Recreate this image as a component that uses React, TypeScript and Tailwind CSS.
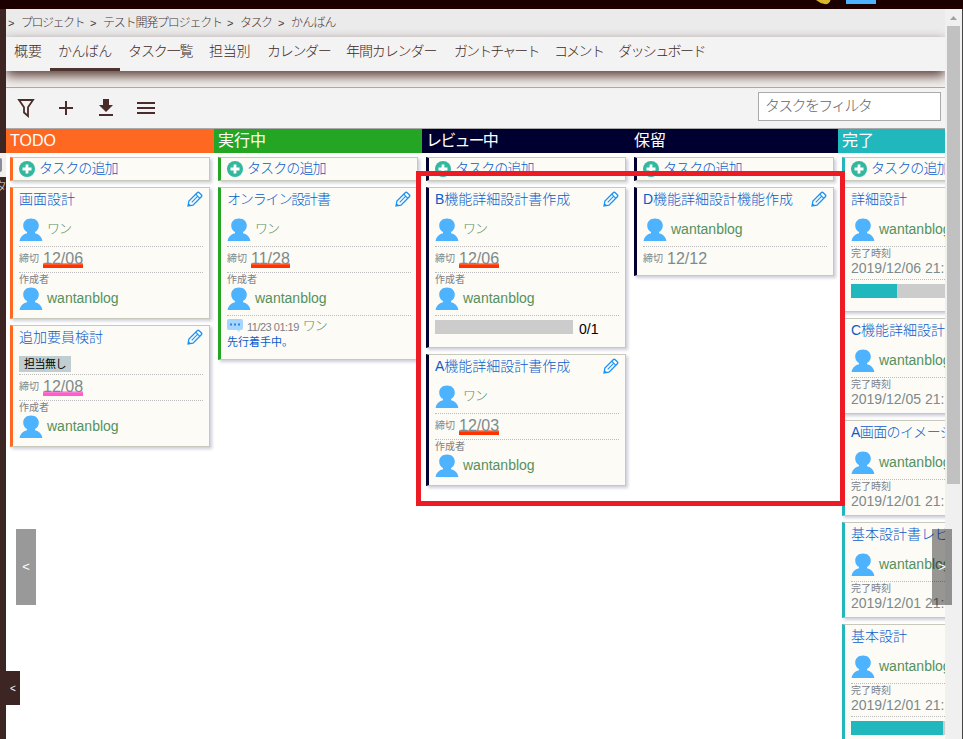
import type { ReactNode } from "react";
import clsx from "clsx";

type Comment = { time: string; author: string; text: string };

type Task = {
  title: string;
  tracking?: string;
  assignee?: string;
  due?: string;
  dueColor?: "red" | "pink";
  creator?: string;
  comment?: Comment;
  finished?: string;
  progress?: number;
  count?: string;
};

type Column = {
  name: string;
  header: string;
  edge: string;
  tasks: Task[];
};

const columns: Column[] = [
  {
    name: "TODO",
    header: "bg-[#ff6820]",
    edge: "border-l-[#ff6820]",
    tasks: [
      { title: "画面設計", assignee: "ワン", due: "12/06", dueColor: "red", creator: "wantanblog" },
      { title: "追加要員検討", due: "12/08", dueColor: "pink", creator: "wantanblog" },
    ],
  },
  {
    name: "実行中",
    header: "bg-[#24a624]",
    edge: "border-l-[#24a624]",
    tasks: [
      {
        title: "オンライン設計書",
        tracking: "tracking-[-1.15px]",
        assignee: "ワン",
        due: "11/28",
        dueColor: "red",
        creator: "wantanblog",
        comment: { time: "11/23 01:19", author: "ワン", text: "先行着手中。" },
      },
    ],
  },
  {
    name: "レビュー中",
    header: "bg-[#000030]",
    edge: "border-l-[#000030]",
    tasks: [
      {
        title: "B機能詳細設計書作成",
        assignee: "ワン",
        due: "12/06",
        dueColor: "red",
        creator: "wantanblog",
        progress: 0,
        count: "0/1",
      },
      { title: "A機能詳細設計書作成", assignee: "ワン", due: "12/03", dueColor: "red", creator: "wantanblog" },
    ],
  },
  {
    name: "保留",
    header: "bg-[#000030]",
    edge: "border-l-[#000030]",
    tasks: [{ title: "D機能詳細設計機能作成", assignee: "wantanblog", due: "12/12" }],
  },
  {
    name: "完了",
    header: "bg-[#20b7bd]",
    edge: "border-l-[#20b7bd]",
    tasks: [
      { title: "詳細設計", assignee: "wantanblog", finished: "2019/12/06 21:", progress: 1 / 3 },
      { title: "C機能詳細設計", assignee: "wantanblog", finished: "2019/12/05 21:" },
      { title: "A画面のイメージ", tracking: "tracking-[-0.6px]", assignee: "wantanblog", finished: "2019/12/01 21:" },
      { title: "基本設計書レビュー", assignee: "wantanblog", finished: "2019/12/01 21:" },
      { title: "基本設計", assignee: "wantanblog", finished: "2019/12/01 21:", progress: 2 / 3 },
    ],
  },
];

const tabs = [
  { label: "概要", width: "w-[44px]", tracking: "" },
  { label: "かんばん", width: "w-[70px]", tracking: "tracking-[-0.6px]" },
  { label: "タスク一覧", width: "w-[81px]", tracking: "tracking-[-1.1px]" },
  { label: "担当別", width: "w-[58px]", tracking: "tracking-[-0.3px]" },
  { label: "カレンダー", width: "w-[79px]", tracking: "tracking-[-1.3px]" },
  { label: "年間カレンダー", width: "w-[108px]", tracking: "tracking-[-1.1px]" },
  { label: "ガントチャート", width: "w-[100px]", tracking: "tracking-[-1.9px]" },
  { label: "コメント", width: "w-[64px]", tracking: "tracking-[-1.7px]" },
  { label: "ダッシュボード", width: "w-[104px]", tracking: "tracking-[-1.6px]" },
];

const crumbs = [
  { label: "プロジェクト", width: "w-[67px]", tracking: "tracking-[-1.5px]" },
  { label: "テスト開発プロジェクト", width: "w-[122px]", tracking: "tracking-[-1.2px]" },
  { label: "タスク", width: "w-[36px]", tracking: "tracking-[-1.5px]" },
  { label: "かんばん", width: "w-[60px]", tracking: "tracking-[-0.8px]" },
];

function PersonIcon() {
  return (
    <svg width="24" height="24" viewBox="0 0 24 24" className="shrink-0" fill="#4db3ff">
      <path d="M12 .5c4.600 0 7.800 2.800 7.800 7 0 3.200-1.600 5.400-3.800 6.500v1.200c4.300 1 6.900 4 7.400 7.800H.600c.5-3.800 3.100-6.800 7.400-7.800V14c-2.200-1.100-3.800-3.300-3.800-6.500 0-4.200 3.200-7 7.800-7z" />
    </svg>
  );
}

function PencilIcon() {
  return (
    <svg width="16" height="16" viewBox="0 0 16 16" fill="none" stroke="#1b92f5" strokeWidth="1.300">
      <path d="M1 15l.9-5L10.200 1.700q1-1 2 0l2.100 2.100q1 1 0 2L6 14.100z" />
      <path d="M8.700 3.200l4.100 4.100M4.700 11.300l5.600-5.600" strokeWidth="1.100" />
      <path d="M1 15l.6-2.900 2.300 2.300z" fill="#1b92f5" stroke="none" />
    </svg>
  );
}

function AddIcon() {
  return (
    <svg width="16" height="16" viewBox="0 0 16 16">
      <circle cx="8" cy="8" r="8" fill="#33b89f" />
      <path d="M8 3.500v9M3.500 8h9" stroke="#fff" strokeWidth="2.800" />
    </svg>
  );
}

function CommentIcon() {
  return (
    <svg width="16" height="13" viewBox="0 0 16 13">
      <path d="M2 0h12q2 0 2 2v7q0 2-2 2h-1.500v2L10 11H2q-2 0-2-2V2q0-2 2-2z" fill="#a6d5ff" />
      <path d="M3 4.500h2v2H3zM7 4.500h2v2H7zM11 4.500h2v2h-2z" fill="#2c86dc" />
    </svg>
  );
}

function Person({ name }: { name: string }) {
  return (
    <div className="flex h-[26px] items-center gap-1 text-[#559060]">
      <PersonIcon />
      <span className={name === "ワン" ? "pb-[3px] text-[13px] tracking-[-1px]" : "pb-px"}>{name}</span>
    </div>
  );
}

function Section({ height, children }: { height: string; children: ReactNode }) {
  return <div className={clsx("border-t border-dotted border-[#bbb]", height)}>{children}</div>;
}

function Progress({ value, count }: { value: number; count?: string }) {
  return (
    <div className="flex items-center gap-[6px] pt-1 text-black">
      <div className="h-[14px] w-[138px] shrink-0 bg-[#ccc]">
        <div className="h-full bg-[#20b7bd]" style={{ width: `${value * 100}%` }} />
      </div>
      <span className="h-[14px] leading-[18px]">{count}</span>
    </div>
  );
}

function TaskCard({ task, edge }: { task: Task; edge: string }) {
  return (
    <div
      className={clsx(
        "w-[200px] shrink-0 border border-l-[3px] border-[#c8c8bc] bg-[#fcfbf6] px-[6px] pb-[3px] shadow-[2px_2px_3px_rgba(0,0,60,0.2)]",
        edge,
      )}
    >
      <div className={task.assignee ? "h-[58px]" : "h-12"}>
        <div className="flex h-[29px] items-start justify-between">
          <span className={clsx("leading-[22px] whitespace-nowrap text-[#0b5bcb]", task.tracking)}>{task.title}</span>
          <span className="pt-[3px]">
            <PencilIcon />
          </span>
        </div>
        {task.assignee ? (
          <Person name={task.assignee} />
        ) : (
          <div className="mt-px flex h-4 w-[52px] items-center justify-center bg-[#c0ced2] text-[11px] font-normal tracking-[-0.5px] text-black">
            担当無し
          </div>
        )}
      </div>
      {task.due && (
        <Section height="h-[26px]">
          <div className="flex items-center gap-1 pt-[3px] text-[#7c8a8c]">
            <span className="pb-px text-[10px] font-normal">締切</span>
            <span
              className={clsx(
                "h-[18px] text-[16px] leading-[18px]",
                task.dueColor === "red" && "bg-[linear-gradient(transparent_72%,#ff9a80_74%,#ff3300_84%)]",
                task.dueColor === "pink" && "bg-[linear-gradient(transparent_72%,#ffb0e0_74%,#ff5ccc_84%)]",
              )}
            >
              {task.due}
            </span>
          </div>
        </Section>
      )}
      {task.creator && (
        <Section height="h-[43px]">
          <div className="h-[13px] text-[10px] leading-[14px] font-normal text-[#7c8088]">作成者</div>
          <Person name={task.creator} />
        </Section>
      )}
      {task.finished && (
        <Section height="h-[33px]">
          <div className="h-[13px] text-[10px] leading-[14px] font-normal text-[#7c8088]">完了時刻</div>
          <div className="leading-4 whitespace-nowrap text-[#7c8a8c]">{task.finished}</div>
        </Section>
      )}
      {task.comment && (
        <Section height="h-[41px]">
          <div className="flex h-[18px] items-center gap-1 pt-px">
            <CommentIcon />
            <span className="pt-[3px] text-[11px] tracking-[-0.5px] text-[#7c8088]">{task.comment.time}</span>
            <span className="text-[13px] tracking-[-1px] text-[#559060]">{task.comment.author}</span>
          </div>
          <div className="text-[11px] leading-4 font-normal text-[#0b5bcb]">{task.comment.text}</div>
        </Section>
      )}
      {task.progress !== undefined && (
        <Section height="h-[29px]">
          <Progress value={task.progress} count={task.count} />
        </Section>
      )}
    </div>
  );
}

function BoardColumn({ column }: { column: Column }) {
  return (
    <section className="w-[208px] shrink-0">
      <h2 className={clsx("h-6 pl-1 text-[16px] leading-[23px] font-normal text-white", column.header)}>
        <span className={column.name === "レビュー中" ? "tracking-[-1.8px]" : ""}>{column.name}</span>
      </h2>
      <div className="flex flex-col gap-[6px] px-1 pt-1">
        <button
          className={clsx(
            "flex h-6 w-[200px] items-center gap-1 border border-l-[3px] border-[#c8c8bc] bg-[#fcfbf6] px-[6px] text-[#0b5bcb] shadow-[2px_2px_3px_rgba(0,0,60,0.2)]",
            column.edge,
          )}
        >
          <AddIcon />
          <span className="pb-px tracking-[-0.9px] whitespace-nowrap">タスクの追加</span>
        </button>
        {column.tasks.map((task, i) => (
          <TaskCard key={i} task={task} edge={column.edge} />
        ))}
      </div>
    </section>
  );
}

function Toolbar() {
  return (
    <div className="flex h-[42px] shrink-0 items-center justify-between border-y border-[#aaa] bg-[#f3f3f3] pr-1 pl-[10px]">
      <div className="flex items-center gap-5 text-[#4a2c2a]">
        <svg width="20" height="20" viewBox="0 0 20 20" fill="none" stroke="currentColor" strokeWidth="1.800">
          <path d="M3 2h14L12 9.200v8.800L8 14.500V9.200z" />
        </svg>
        <svg width="20" height="20" viewBox="0 0 20 20" stroke="currentColor" strokeWidth="2">
          <path d="M10 3v14M3 10h14" />
        </svg>
        <svg width="20" height="20" viewBox="0 0 20 20" fill="currentColor">
          <path d="M7 1h6v6h4l-7 7-7-7h4zM3 16h14v2H3z" />
        </svg>
        <svg width="20" height="20" viewBox="0 0 20 20" stroke="currentColor" strokeWidth="2">
          <path d="M1 5h18M1 10h18M1 15h18" />
        </svg>
      </div>
      <input
        className="mb-1 h-[29px] w-[183px] border border-[#aaa] bg-white px-[6px] pb-[2px] text-[15px] tracking-[-1.700px] placeholder:text-[#666]"
        placeholder="タスクをフィルタ"
      />
    </div>
  );
}

function Scrollbar() {
  return (
    <div className="flex w-[17px] shrink-0 flex-col items-start bg-[#f0f0f0] pl-[2px]">
      <svg width="13" height="17" viewBox="0 0 13 17" fill="#a0a0a0">
        <path d="M3 11h7L6.500 7z" />
      </svg>
      <div className="h-[458px] w-[13px] bg-[#c1c1c1]" />
    </div>
  );
}

export default function App() {
  return (
    <div className="relative flex h-[739px] w-[963px] flex-col overflow-hidden bg-white font-['Liberation_Sans','Noto_Sans_CJK_JP',sans-serif] text-[14px] font-light">
      <header className="flex h-[9px] shrink-0 items-start bg-[#1c0000] pl-[816px]">
        <svg width="15" height="5" viewBox="0 0 15 5">
          <path d="M0 0h14.500q-1 4-5 4.300Q4 3.500 0 0z" fill="#d9b62b" />
        </svg>
        <div className="ml-[15px] h-1 w-[30px] bg-[#4db3ff]" />
      </header>

      <div className="flex min-h-0 flex-1">
        <aside className="w-[6px] shrink-0 overflow-hidden bg-[#3c2522] pt-36">
          <div className="flex h-6 items-center bg-[#f3f0ee]">
            <div className="h-[14px] w-[2px] rounded-r-full bg-[#8a8c9c]" />
          </div>
          <div className="-ml-[6px] w-5 text-[13px] leading-5 text-[#ddd]">タ</div>
        </aside>

        <main className="flex w-[939px] shrink-0 flex-col overflow-hidden">
          <nav className="flex h-7 shrink-0 items-center bg-[#ebebeb] text-[12px] text-[#4a3836]">
            {crumbs.map((crumb) => (
              <div key={crumb.label} className="flex pl-[2px]">
                <span className="w-[13px] text-[11px] leading-[18px]">&gt;</span>
                <span className={clsx("whitespace-nowrap", crumb.width, crumb.tracking)}>{crumb.label}</span>
              </div>
            ))}
          </nav>

          <nav className="z-10 flex h-[34px] shrink-0 bg-[#f3f3f3] text-[#3f2a27] shadow-[0_5px_12px_#5a3f38]">
            {tabs.map((tab) => (
              <a
                key={tab.label}
                className={clsx(
                  "h-full pl-2 leading-[29px] whitespace-nowrap",
                  tab.width,
                  tab.tracking,
                  tab.label === "かんばん" && "border-b-[3px] border-[#4e342e]",
                )}
              >
                {tab.label}
              </a>
            ))}
          </nav>

          <div className="h-4 shrink-0 bg-[#f3f0ee]" />
          <Toolbar />

          <div className="flex min-h-0 flex-1 overflow-hidden">
            {columns.map((column) => (
              <BoardColumn key={column.name} column={column} />
            ))}
          </div>
        </main>

        <Scrollbar />
        <div className="w-px bg-[#444]" />
      </div>

      <div className="absolute top-[171px] left-[416px] h-[335px] w-[429px] border-[5px] border-[#ed1c24]" />

      <button className="absolute top-[529px] left-4 h-[76px] w-5 bg-black/40 text-[13px] text-white">&lt;</button>
      <button className="absolute top-[529px] left-[932px] h-[76px] w-5 bg-black/40 text-[13px] text-white">&gt;</button>
      <button className="absolute top-[671px] left-0 h-[34px] w-5 bg-[#3c2522] pl-[6px] text-[10px] text-white">
        &lt;
      </button>
    </div>
  );
}
